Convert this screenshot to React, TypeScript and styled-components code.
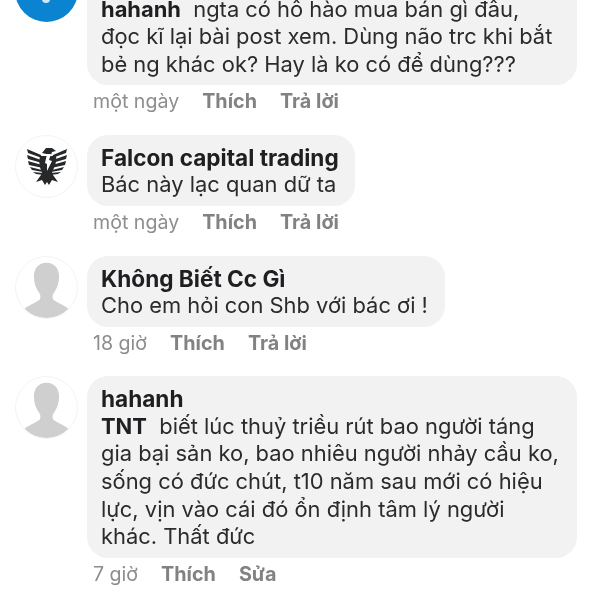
import React from 'react';
import styled, { createGlobalStyle } from 'styled-components';

interface IMeta {
  time: string;
  action: string;
}

const GlobalStyle = createGlobalStyle`
  html, body {
    margin: 0;
    height: 100%;
    background: #ffffff;
    overflow: hidden;
  }
`;

const UserSilhouette = () => (
  <svg width="61" height="61" viewBox="0 0 63 63">
    <path
      d="M31.5 6c-8 0-13 6-13 14 0 7 2 13 6 18 1 2 1 4 0 6-3 3-10 5-15 9l-1 1c5 5 14 9 23 9s18-4 23-9l-1-1c-5-4-12-6-15-9-1-2-1-4 0-6 4-5 6-11 6-18 0-8-5-14-13-14z"
      fill="#cfcfd0"
    />
  </svg>
);

const FalconLogo = () => (
  <svg width="40" height="38" viewBox="0 0 40 38">
    <g fill="#26282a">
      <path d="M15 6l4-5h6l4 3-4 1-1 3z" />
      <path d="M13 9h14l2-1c1 6-1 12-4 17l1 3 5 7-6-2-3 5-2-3-2 3-3-5-6 2 5-7 1-3c-3-5-3-11-2-16z" />
      <path d="M0 2l14 6 1 3L1 6zM0 8l14 5 1 3L1 12zM1 14l14 4 1 3L2 18zM3 20l12 3 1 2L5 23zM6 25l10 1 1 2-8-1z" />
      <path d="M40 2L26 8l-1 3 14-5zM40 8l-14 5-1 3 14-4zM39 14l-14 4-1 3 14-3zM37 20l-12 3-1 2 11-2zM34 25l-10 1-1 2 8-1z" />
    </g>
    <path d="M20 7h4l-2 6 3 1-5 10v-7l-2-1z" fill="#ffffff" />
  </svg>
);

const App: React.FC = () => {
  return (
    <>
      <GlobalStyle />
      <CommentList>
        <CommentRow>
          <Avatar $bg="#0a84d0" $bordered={false}>
            <AvatarDot />
          </Avatar>
          <CommentBody>
            <Bubble $width={490}>
              <Name>&nbsp;</Name>
              <Line>
                <Tag>hahanh</Tag>&nbsp; ngta có hô hào mua bán gì đâu,
              </Line>
              <Line>đọc kĩ lại bài post xem. Dùng não trc khi bắt</Line>
              <Line>bẻ ng khác ok? Hay là ko có để dùng???</Line>
            </Bubble>
            <Meta time="một ngày" action="Trả lời" />
          </CommentBody>
        </CommentRow>

        <CommentRow>
          <Avatar>
            <FalconLogo />
          </Avatar>
          <CommentBody>
            <Bubble $width={268}>
              <Name>Falcon capital trading</Name>
              <Line>Bác này lạc quan dữ ta</Line>
            </Bubble>
            <Meta time="một ngày" action="Trả lời" />
          </CommentBody>
        </CommentRow>

        <CommentRow>
          <Avatar>
            <UserSilhouette />
          </Avatar>
          <CommentBody>
            <Bubble $width={358}>
              <Name>Không Biết Cc Gì</Name>
              <Line>Cho em hỏi con Shb với bác ơi !</Line>
            </Bubble>
            <Meta time="18 giờ" action="Trả lời" />
          </CommentBody>
        </CommentRow>

        <CommentRow>
          <Avatar>
            <UserSilhouette />
          </Avatar>
          <CommentBody>
            <Bubble $width={490}>
              <Name>hahanh</Name>
              <Line>
                <Tag>TNT</Tag>&nbsp; biết lúc thuỷ triều rút bao người táng
              </Line>
              <Line>gia bại sản ko, bao nhiêu người nhảy cầu ko,</Line>
              <Line>sống có đức chút, t10 năm sau mới có hiệu</Line>
              <Line>lực, vịn vào cái đó ổn định tâm lý người</Line>
              <Line>khác. Thất đức</Line>
            </Bubble>
            <Meta time="7 giờ" action="Sửa" />
          </CommentBody>
        </CommentRow>
      </CommentList>
    </>
  );
};

const Meta: React.FC<IMeta> = ({ time, action }) => (
  <MetaRow>
    <span>{time}</span>
    <MetaAction>Thích</MetaAction>
    <MetaAction>{action}</MetaAction>
  </MetaRow>
);

export default App;

// Styles |
//        v

const CommentList = styled.div`
  display: flex;
  flex-direction: column;
  gap: 17.5px;
  margin-top: -41px;
  padding-left: 15px;
  font-family: Inter, "Liberation Sans", sans-serif;
  filter: blur(0.4px);
`;

const CommentRow = styled.div`
  display: flex;
  align-items: flex-start;
  gap: 9px;
`;

const Avatar = styled.div<{ $bg?: string; $bordered?: boolean }>`
  display: flex;
  flex: none;
  align-items: center;
  justify-content: center;
  position: relative;
  box-sizing: border-box;
  width: 63px;
  height: 63px;
  border-radius: 50%;
  overflow: hidden;
  background: ${({ $bg }) => $bg || '#ffffff'};
  border: ${({ $bordered = true }) => ($bordered ? '1px solid #f3f3f3' : 'none')};
`;

const AvatarDot = styled.div`
  position: absolute;
  left: 27px;
  bottom: 19px;
  width: 8px;
  height: 8px;
  border-radius: 50%;
  background: #cfe8f8;
`;

const CommentBody = styled.div`
  display: flex;
  flex-direction: column;
  align-items: flex-start;
`;

const Bubble = styled.div<{ $width: number }>`
  box-sizing: border-box;
  width: ${({ $width }) => $width}px;
  padding: 9px 0 7px 14px;
  border-radius: 21px;
  background: #f2f2f3;
  color: #2b2b2d;
  font-size: 21.9px;
  line-height: 27.6px;
  white-space: nowrap;
`;

const Name = styled.div`
  font-weight: 700;
  font-size: 22.6px;
  color: #1f1f21;
`;

const Tag = styled.span`
  font-weight: 700;
  color: #1f1f21;
`;

const Line = styled.div``;

const MetaRow = styled.div`
  display: flex;
  align-items: center;
  gap: 23px;
  height: 32px;
  padding-left: 6px;
  color: #8e8e90;
  font-size: 19.6px;
`;

const MetaAction = styled.span`
  font-weight: 700;
  font-size: 19.8px;
  color: #828284;
`;
